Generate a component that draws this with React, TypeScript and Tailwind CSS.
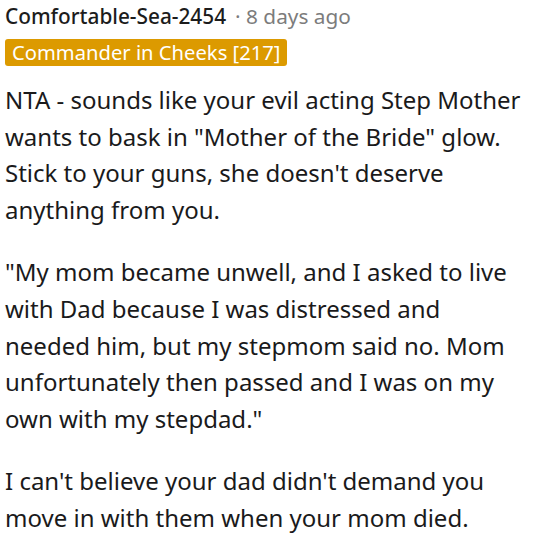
export default function App() {
  return (
    <div className="w-[536px] h-[540px] overflow-hidden bg-white px-[5px] font-['Noto_Sans',sans-serif]">
      <div className="flex items-baseline pt-[1px] text-[20.8px] leading-[30px]">
        <span className="font-medium text-[#1c1c1c]">Comfortable-Sea-2454</span>
        <span className="ml-[9px] text-[#7c7c7c]">· 8 days ago</span>
      </div>
      <div className="mt-[8px] flex">
        <span className="rounded-[3px] bg-[#dc9a00] px-[7px] text-[20.2px] leading-[27px] text-white">
          Commander in Cheeks [217]
        </span>
      </div>
      <div className="mt-[16px] text-[24px] leading-[36.6px] text-[#1a1a1b]">
        <p>
          NTA - sounds like your evil acting Step Mother wants to bask in "Mother of the Bride" glow. Stick to
          your guns, she doesn't deserve anything from you.
        </p>
        <p className="mt-[26px]">
          "My mom became unwell, and I asked to live with Dad because I was distressed and needed him, but my
          stepmom said no. Mom unfortunately then passed and I was on my own with my stepdad."
        </p>
        <p className="mt-[26px]">
          I can't believe your dad didn't demand you move in with them when your mom died.
        </p>
      </div>
    </div>
  );
}
